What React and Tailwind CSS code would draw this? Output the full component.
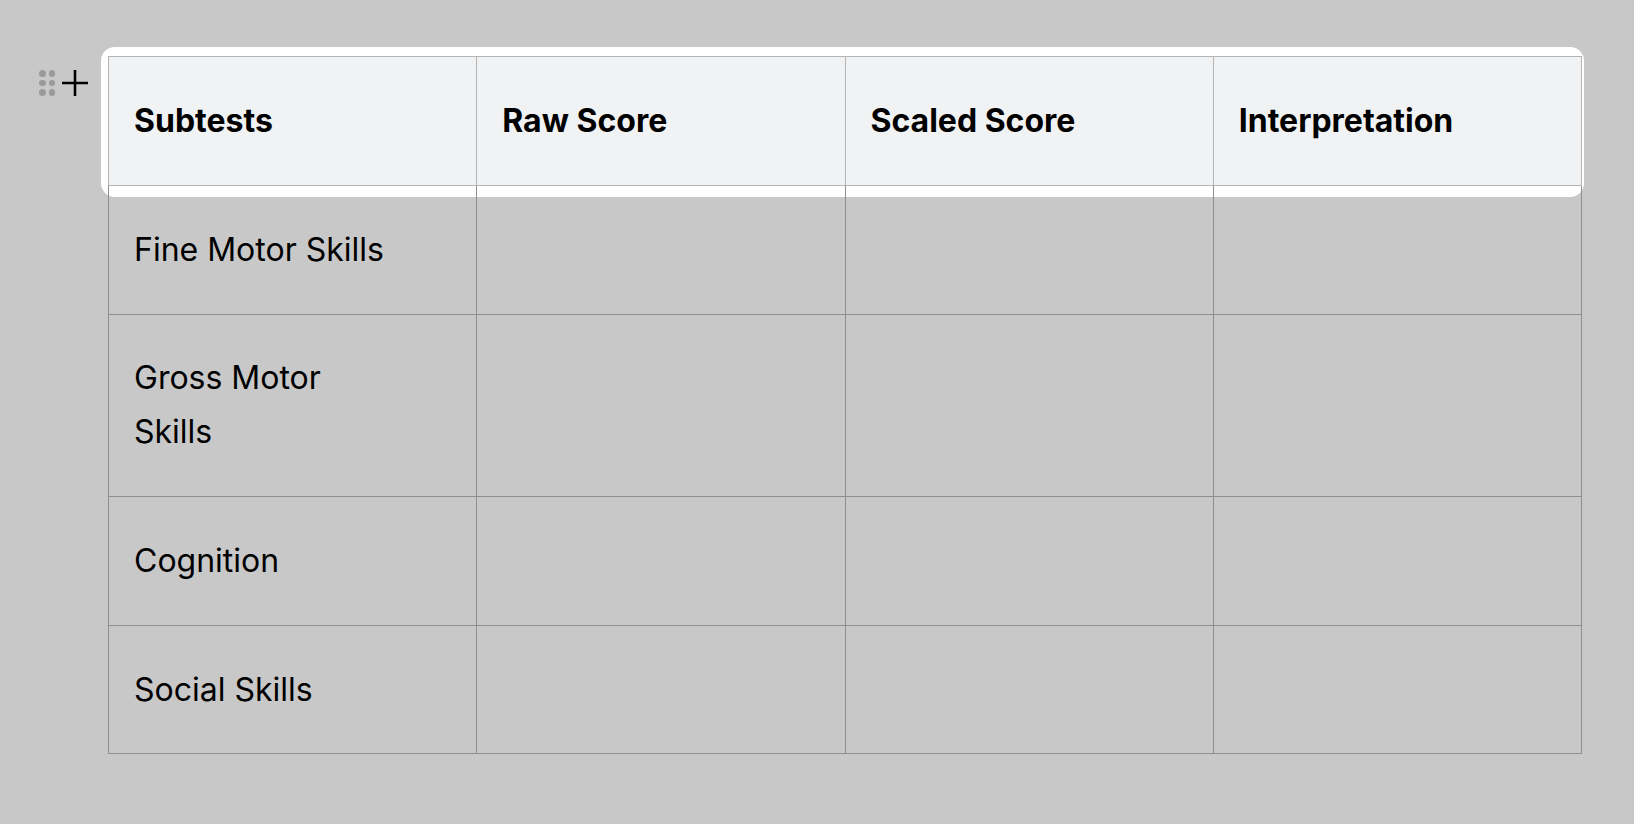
import React from 'react';

const headers = ['Subtests', 'Raw Score', 'Scaled Score', 'Interpretation'];
const rows = [
  ['Fine Motor Skills', '', '', ''],
  ['Gross Motor Skills', '', '', ''],
  ['Cognition', '', '', ''],
  ['Social Skills', '', '', ''],
];

const DragHandle = () => (
  <div className="grid grid-cols-2 gap-[3px]">
    {[0, 1, 2, 3, 4, 5].map((i) => (
      <span key={i} className="block w-[6.5px] h-[6.5px] rounded-full bg-[#9a9a9a]" />
    ))}
  </div>
);

const App = () => {
  return (
    <div
      className="min-h-screen bg-[#c8c8c8] pt-[56px] pl-[39px] flex items-start"
      style={{ fontFamily: 'Inter, "Noto Sans", sans-serif' }}
    >
      {/* Gutter controls */}
      <div className="w-[69px] flex items-center gap-[6px] mt-[13px]">
        <DragHandle />
        <svg width="28" height="28" viewBox="0 0 28 28" className="text-black">
          <path d="M14 1v26M1 14h26" stroke="currentColor" strokeWidth="2.6" fill="none" />
        </svg>
      </div>

      {/* Table */}
      <div className="relative">
        <div className="absolute left-[-7px] top-[-9px] right-[-2px] h-[150px] rounded-[14px] bg-white" />
        <table className="relative table-fixed border-collapse w-[1474px] text-[32px] leading-[54px] text-black">
          <thead>
            <tr>
              {headers.map((h) => (
                <th
                  key={h}
                  className="bg-[#f1f2f4] border border-[#b4b4b4] pl-[25px] pr-6 py-[37px] text-left font-bold"
                >
                  {h}
                </th>
              ))}
            </tr>
          </thead>
          <tbody>
            {rows.map((row, i) => (
              <tr key={i}>
                {row.map((cell, j) => (
                  <td
                    key={j}
                    className="border border-[#8f8f8f] pl-[25px] pr-6 py-[36.8px] align-top"
                  >
                    {j === 0 && i === 1 ? (
                      <span className="block w-[210px]">{cell}</span>
                    ) : (
                      cell
                    )}
                  </td>
                ))}
              </tr>
            ))}
          </tbody>
        </table>
      </div>
    </div>
  );
};

export default App;
